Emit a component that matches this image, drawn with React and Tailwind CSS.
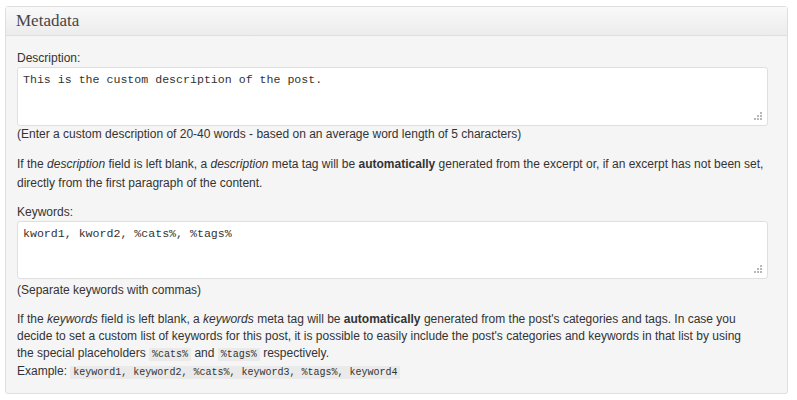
import React from 'react'

const sans = { fontFamily: '"Liberation Sans", Arial, sans-serif' }

function Code({ children }) {
  return (
    <code className="bg-[#eaeaea] px-[3px] py-[1px] font-['Liberation_Mono',monospace] text-[10px] text-[#333]">
      {children}
    </code>
  )
}

function Grip() {
  return (
    <svg width="9" height="9" viewBox="0 0 9 9" className="absolute right-[4px] bottom-[4px]">
      <rect x="6" y="0" width="2" height="2" fill="#b8b8b8" />
      <rect x="3" y="3" width="2" height="2" fill="#b8b8b8" />
      <rect x="6" y="3" width="2" height="2" fill="#b8b8b8" />
      <rect x="0" y="6" width="2" height="2" fill="#b8b8b8" />
      <rect x="3" y="6" width="2" height="2" fill="#b8b8b8" />
      <rect x="6" y="6" width="2" height="2" fill="#b8b8b8" />
    </svg>
  )
}

function Field({ value, h }) {
  return (
    <div className={`relative w-[751px] rounded-[3px] border border-[#dfdfdf] bg-white px-[5px] pt-[4px] ${h}`}>
      <div className="font-['Liberation_Mono',monospace] text-[11.6px] leading-[16px] text-[#333]">{value}</div>
      <Grip />
    </div>
  )
}

export default function App() {
  return (
    <div className="h-[400px] w-[797px] bg-white pt-[6px] pl-[5px]" style={sans}>
      <div className="w-[783px] rounded-[3px] border border-[#dfdfdf] bg-[#f5f5f5]">
        <div className="flex h-[29px] items-center border-b border-[#dfdfdf] bg-gradient-to-b from-[#f9f9f9] to-[#ececec] px-[10px]">
          <h3 className="font-['Liberation_Serif',serif] text-[17px] text-[#464646]">Metadata</h3>
        </div>
        <div className="px-[11px] pt-[14px] pb-[12px] text-[12px] leading-[17px] text-[#333]">
          <label className="block">Description:</label>
          <Field value="This is the custom description of the post." h="h-[59px]" />
          <p className="mt-[0px]">(Enter a custom description of 20-40 words - based on an average word length of 5 characters)</p>
          <p className="mt-[12px] leading-[19px]">
            If the <i>description</i> field is left blank, a <i>description</i> meta tag will be <b>automatically</b> generated from the excerpt or, if an excerpt has not been set, directly from the first paragraph of the content.
          </p>
          <label className="mt-[11px] block">Keywords:</label>
          <Field value="kword1, kword2, %cats%, %tags%" h="h-[58px]" />
          <p className="mt-[3px]">(Separate keywords with commas)</p>
          <p className="mt-[12px] pr-[20px]">
            If the <i>keywords</i> field is left blank, a <i>keywords</i> meta tag will be <b>automatically</b> generated from the post's categories and tags. In case you decide to set a custom list of keywords for this post, it is possible to easily include the post's categories and keywords in that list by using the special placeholders <Code>%cats%</Code> and <Code>%tags%</Code> respectively.
            <br />
            Example: <Code>keyword1, keyword2, %cats%, keyword3, %tags%, keyword4</Code>
          </p>
        </div>
      </div>
    </div>
  )
}
